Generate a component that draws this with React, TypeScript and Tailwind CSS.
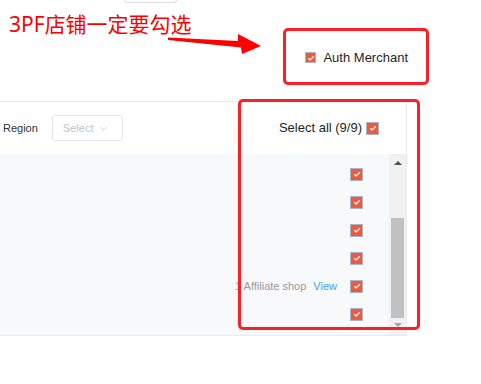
import React from 'react';

const CheckBox: React.FC<{ small?: boolean }> = ({ small }) => (
    <span
        className={
            small
                ? 'flex items-center justify-center w-[11px] h-[11px] bg-[#ef5a3d] border border-[#a9b4d0]'
                : 'flex items-center justify-center w-[13px] h-[13px] bg-[#ef5a3d] border border-[#a9b4d0]'
        }
    >
        <svg viewBox="0 0 10 10" className="w-[8px] h-[8px]">
            <path d="M1.6 5.2 L4 7.4 L8.6 2.8" stroke="white" strokeWidth="1.7" fill="none" />
        </svg>
    </span>
);

const App: React.FC = () => {
    const rows = [0, 1, 2, 3, 4, 5];

    return (
        <div className="relative w-[481px] h-[384px] bg-white overflow-hidden font-['Liberation_Sans',Arial,sans-serif]">
            {/* leftover button edge at the very top */}
            <div className="ml-[124px] w-[53px] h-[3px] border border-t-0 border-[#dcdfe6] rounded-b-[3px]" />

            {/* header */}
            <div className="flex h-[98px]">
                <div className="pl-[9px] pt-[6px] flex items-baseline leading-[28px] text-[#ff0000]">
                    <span className="text-[21px] font-['Noto_Sans',sans-serif]">3PF</span>
                    <span className="text-[21px] font-['Noto_Sans_CJK_SC',sans-serif]">店铺一定要勾选</span>
                </div>
                <div className="ml-auto mr-[73px] mt-[48px] flex items-start gap-[7px] h-[16px]">
                    <span className="mt-[1px]">
                        <CheckBox small />
                    </span>
                    <span className="text-[13px] leading-[14px] text-[#1f1f1f]">Auth Merchant</span>
                </div>
            </div>

            {/* panel */}
            <div className="w-[407px] border-t border-r border-b border-[#e8eaef]">
                <div className="flex items-center h-[52px]">
                    <span className="ml-[3px] text-[11px] text-[#333]">Region</span>
                    <div className="ml-[14px] w-[71px] h-[26px] border border-[#e4e7ed] rounded-[3px] flex items-center pl-[10px] gap-[6px]">
                        <span className="text-[11px] text-[#c0c4cc]">Select</span>
                        <svg viewBox="0 0 10 6" className="w-[9px] h-[5px]">
                            <path d="M1 1 L5 5 L9 1" stroke="#c0c4cc" strokeWidth="1" fill="none" />
                        </svg>
                    </div>
                    <div className="ml-auto mr-[27px] flex items-center gap-[4px]">
                        <span className="text-[13px] text-[#1f1f1f]">Select all (9/9)</span>
                        <CheckBox />
                    </div>
                </div>

                <div className="flex h-[181px] bg-[#f8f9fb]">
                    <div className="flex-1 pt-[6px]">
                        {rows.map((r) => (
                            <div key={r} className="flex items-center justify-end h-[28px] pr-[26px]">
                                {r === 4 && (
                                    <span className="mr-[13px] flex items-center gap-[7px] text-[11px]">
                                        <span className="text-[#999]">1 Affiliate shop</span>
                                        <span className="text-[#409eff]">View</span>
                                    </span>
                                )}
                                <CheckBox />
                            </div>
                        ))}
                    </div>
                    {/* scrollbar */}
                    <div className="w-[17px] bg-[#f1f1f1] flex flex-col items-center">
                        <svg viewBox="0 0 8 4" className="mt-[7px] w-[8px] h-[4px]">
                            <path d="M0 4 L4 0 L8 4 Z" fill="#505050" />
                        </svg>
                        <div className="mt-[53px] w-[13px] h-[100px] bg-[#c1c1c1]" />
                        <svg viewBox="0 0 8 4" className="mt-[5px] w-[8px] h-[4px]">
                            <path d="M0 0 L8 0 L4 4 Z" fill="#a3a3a3" />
                        </svg>
                    </div>
                </div>
            </div>

            {/* annotations */}
            <svg className="absolute left-0 top-0" width="481" height="384" viewBox="0 0 481 384">
                <path d="M168 37.5 L238 41 L238 34 L261 46 L242 54 L241 47.5 L168 40 Z" fill="#ff0000" />
            </svg>
            <div className="absolute left-[283px] top-[28px] w-[146px] h-[57px] border-[3px] border-[#ff1e26] rounded-[5px]" />
            <div className="absolute left-[238px] top-[99px] w-[182px] h-[231px] border-[3px] border-[#ff1e26] rounded-[5px]" />
        </div>
    );
};

export default App;
